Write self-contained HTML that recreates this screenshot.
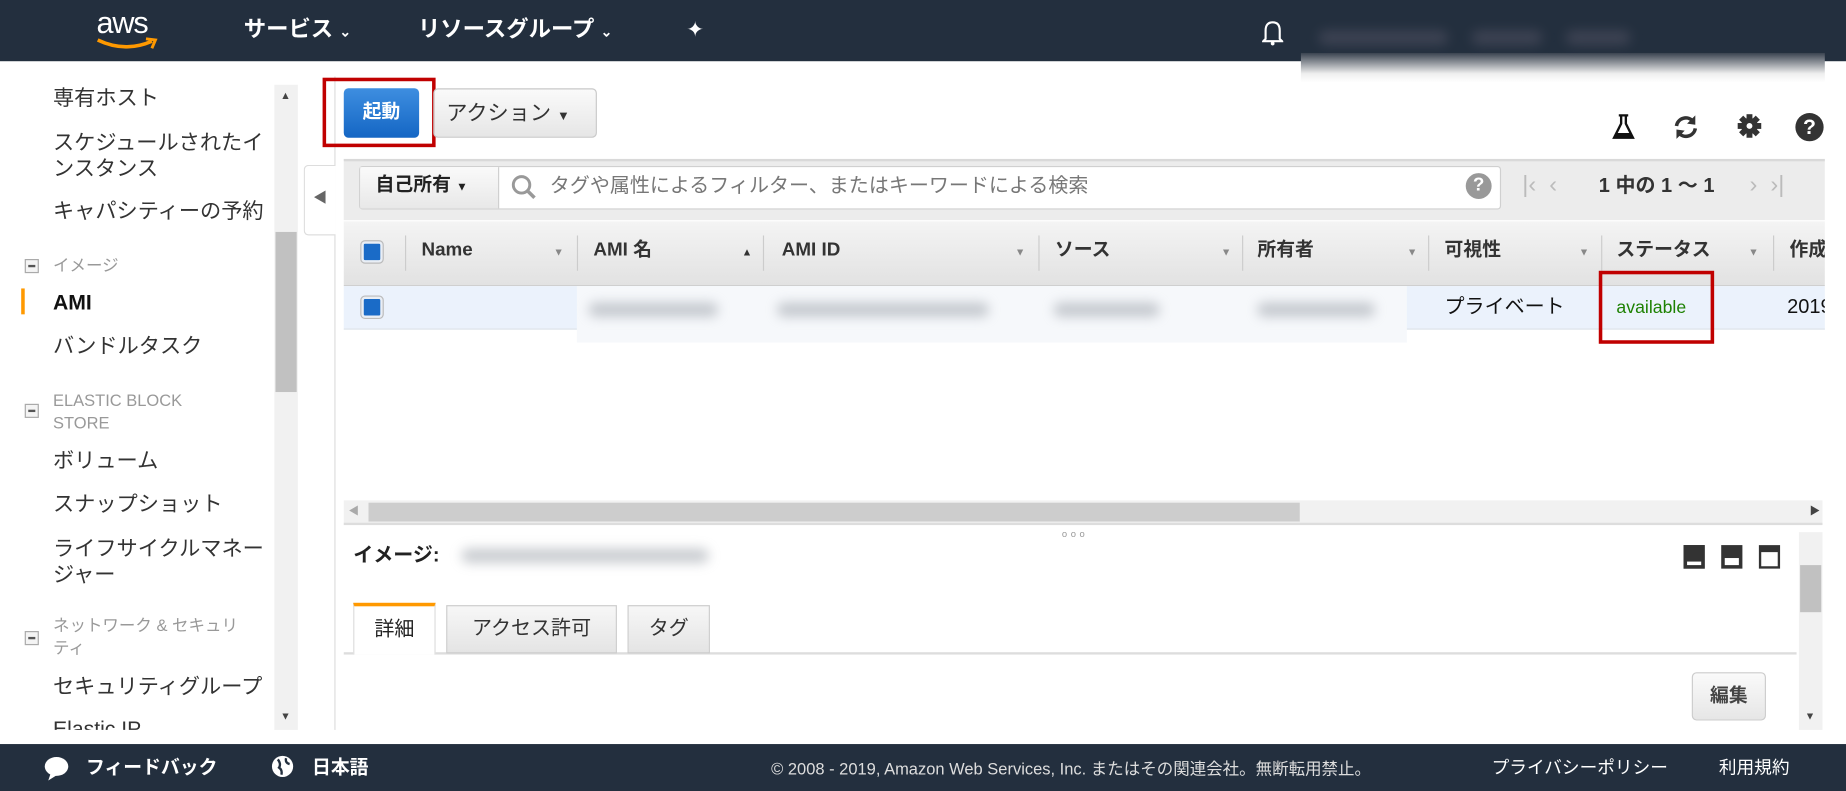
<!DOCTYPE html>
<html><head><meta charset="utf-8"><style>
*{box-sizing:border-box;margin:0;padding:0}
html,body{width:1846px;height:791px;overflow:hidden;background:#fff}
#w{position:absolute;left:0;top:0;width:1568px;height:672px;transform:scale(1.17730);transform-origin:0 0;font-family:"Liberation Sans","Noto Sans CJK JP",sans-serif;color:#222;line-height:1.2}
.a{position:absolute}
.nav{left:0;top:0;width:1568px;height:52px;background:#232f3e}
.nt{color:#fff;font-weight:bold;font-size:19px;top:15px;line-height:22px}
.sb{font-size:18px;color:#333;left:45px;line-height:22px}
.gh{font-size:14px;color:#999;left:45px;line-height:19px}
.mb{left:21px;width:12px;height:12px;border:1px solid #aaa;background:#f4f4f4}
.mb:after{content:"";position:absolute;left:2px;top:4px;width:6px;height:2px;background:#555}
.th{font-size:16px;font-weight:bold;color:#333;top:203px;line-height:20px}
.ar{font-size:9px;color:#888;top:209px}
.sep{top:200px;width:1px;height:30px;background:#ccc}
.cb{width:18px;height:18px;border-radius:3px;background:#1a6bc7;border:2px solid #e9eef5;box-shadow:0 0 0 1px #bbb}
.blur{background:#9aa0a8;filter:blur(5px);opacity:.55;height:12px;border-radius:6px}
.ft{color:#fff;font-size:16px;top:643px;line-height:20px}
</style></head><body><div id="w">
<div class="a nav"></div>
<div class="a" style="left:82px;top:4px;color:#fff;font-size:26px;letter-spacing:-1px">aws</div>
<svg class="a" style="left:80px;top:31px" width="56" height="14"><path d="M3 3 Q26 14 49 4" stroke="#f90" stroke-width="3" fill="none"/><path d="M44 2 L52 3 L49 10" stroke="#f90" stroke-width="2.5" fill="none"/></svg>
<div class="a nt" style="left:207px">サービス <span style="font-size:12px">⌄</span></div>
<div class="a nt" style="left:355px">リソースグループ <span style="font-size:12px">⌄</span></div>
<div class="a" style="left:583px;top:15px;color:#fff;font-size:18px">✦</div>
<svg class="a" style="left:1072px;top:15px" width="18" height="24"><path d="M3 18 L3 11 Q3 4 9 4 Q15 4 15 11 L15 18 L17 20 L1 20 Z" stroke="#fff" stroke-width="1.8" fill="none"/><circle cx="9" cy="22" r="1.6" fill="#fff"/></svg>
<div class="a" style="left:1105px;top:45px;width:445px;height:25px;background:linear-gradient(#3a4350,#eee 70%,#fff)"></div>
<div class="a blur" style="left:1120px;top:26px;width:110px;background:#556"></div>
<div class="a blur" style="left:1250px;top:26px;width:60px;background:#556"></div>
<div class="a blur" style="left:1330px;top:26px;width:55px;background:#556"></div>

<div class="a sb" style="top:72px">専有ホスト</div>
<div class="a sb" style="top:110px">スケジュールされたイ<br>ンスタンス</div>
<div class="a sb" style="top:168px">キャパシティーの予約</div>
<div class="a mb" style="top:220px"></div><div class="a gh" style="top:216px">イメージ</div>
<div class="a" style="left:18px;top:245px;width:3px;height:22px;background:#f90"></div>
<div class="a sb" style="top:246px;font-weight:bold;color:#111">AMI</div>
<div class="a sb" style="top:283px">バンドルタスク</div>
<div class="a mb" style="top:343px"></div><div class="a gh" style="top:331px">ELASTIC BLOCK<br>STORE</div>
<div class="a sb" style="top:380px">ボリューム</div>
<div class="a sb" style="top:417px">スナップショット</div>
<div class="a sb" style="top:455px">ライフサイクルマネー<br>ジャー</div>
<div class="a mb" style="top:536px"></div><div class="a gh" style="top:522px">ネットワーク &amp; セキュリ<br>ティ</div>
<div class="a sb" style="top:572px">セキュリティグループ</div>
<div class="a sb" style="top:608px;height:12px;overflow:hidden">Elastic IP</div>
<div class="a" style="left:233px;top:72px;width:20px;height:548px;background:#f1f1f1"></div>
<div class="a" style="left:234px;top:197px;width:18px;height:136px;background:#c1c1c1"></div>
<div class="a" style="left:238px;top:76px;font-size:9px;color:#444">▲</div>
<div class="a" style="left:238px;top:603px;font-size:9px;color:#444">▼</div>
<div class="a" style="left:284px;top:65px;width:1px;height:555px;background:#ddd"></div>
<div class="a" style="left:258px;top:140px;width:27px;height:60px;border:1px solid #ddd;border-right:none;background:#fff;border-radius:4px 0 0 4px;color:#666;font-size:12px;padding:20px 0 0 7px">◀</div>

<div class="a" style="left:292px;top:75px;width:64px;height:42px;background:linear-gradient(#3e8ee0,#1466c4);border-radius:4px;color:#fff;font-weight:bold;font-size:16px;text-align:center;line-height:42px">起動</div>
<div class="a" style="left:274px;top:66px;width:96px;height:59px;border:3px solid #c00000"></div>
<div class="a" style="left:368px;top:75px;width:139px;height:42px;background:linear-gradient(#fafafa,#e6e6e6);border:1px solid #c8c8c8;border-radius:4px;font-size:18px;color:#333;padding:0 0 0 10px;line-height:40px">アクション <span style="font-size:11px">▼</span></div>
<svg class="a" style="left:1368px;top:96px" width="22" height="24"><path d="M7 2 H15 M9 2 V9 L3 21 H19 L13 9 V2" stroke="#111" stroke-width="2" fill="none"/><path d="M5 17 L17 17 L19 21 H3 Z" fill="#111"/></svg>
<svg class="a" style="left:1420px;top:96px" width="24" height="24"><path d="M4 11 A8 8 0 0 1 18 7" stroke="#333" stroke-width="3" fill="none"/><path d="M20 2 L20 10 L13 9 Z" fill="#333"/><path d="M20 13 A8 8 0 0 1 6 17" stroke="#333" stroke-width="3" fill="none"/><path d="M4 22 L4 14 L11 15 Z" fill="#333"/></svg>
<svg class="a" style="left:1475px;top:96px" width="22" height="22"><g fill="#333" transform="translate(11 11)"><circle r="7"/><rect x="-2.5" y="-10" width="5" height="20"/><rect x="-10" y="-2.5" width="20" height="5"/><rect x="-2.5" y="-10" width="5" height="20" transform="rotate(45)"/><rect x="-2.5" y="-10" width="5" height="20" transform="rotate(-45)"/></g><circle cx="11" cy="11" r="2.5" fill="#fff"/></svg>
<div class="a" style="left:1525px;top:96px;width:24px;height:24px;border-radius:50%;background:#333;color:#fff;font-weight:bold;font-size:18px;text-align:center;line-height:24px">?</div>

<div class="a" style="left:292px;top:135px;width:1258px;height:52px;background:#ececec;border-top:2px solid #d9d9d9"></div>
<div class="a" style="left:305px;top:141px;width:970px;height:37px;background:#fff;border:1px solid #d0d0d0;border-radius:3px"></div>
<div class="a" style="left:306px;top:142px;width:118px;height:35px;background:linear-gradient(#fafafa,#e8e8e8);border-right:1px solid #d0d0d0;font-size:16px;font-weight:bold;color:#222;padding-left:13px;line-height:32px">自己所有 <span style="font-size:10px;font-weight:normal">▼</span></div>
<svg class="a" style="left:433px;top:147px" width="24" height="24"><circle cx="10" cy="10" r="7" stroke="#999" stroke-width="2.5" fill="none"/><path d="M15 15 L21 21" stroke="#999" stroke-width="3"/></svg>
<div class="a" style="left:467px;top:147px;font-size:17px;color:#777;line-height:22px">タグや属性によるフィルター、またはキーワードによる検索</div>
<div class="a" style="left:1245px;top:147px;width:22px;height:22px;border-radius:50%;background:#999;color:#fff;font-weight:bold;font-size:16px;text-align:center;line-height:22px">?</div>
<div class="a" style="left:1293px;top:145px;font-size:20px;color:#bbb;line-height:24px">|‹ &nbsp;‹</div>
<div class="a" style="left:1358px;top:147px;font-size:17px;font-weight:bold;color:#333;line-height:22px">1 中の 1 ～ 1</div>
<div class="a" style="left:1486px;top:145px;font-size:20px;color:#bbb;line-height:24px">› &nbsp;›|</div>

<div class="a" style="left:292px;top:188px;width:1258px;height:55px;background:linear-gradient(#f4f4f4,#e2e2e2);border-bottom:1px solid #cfcfcf"></div>
<div class="a cb" style="left:307px;top:205px"></div>
<div class="a sep" style="left:344px"></div>
<div class="a th" style="left:358px">Name</div><div class="a ar" style="left:470px">▼</div><div class="a sep" style="left:490px"></div>
<div class="a th" style="left:504px">AMI 名</div><div class="a ar" style="left:630px;color:#333">▲</div><div class="a sep" style="left:648px"></div>
<div class="a th" style="left:664px">AMI ID</div><div class="a ar" style="left:862px">▼</div><div class="a sep" style="left:882px"></div>
<div class="a th" style="left:896px">ソース</div><div class="a ar" style="left:1037px">▼</div><div class="a sep" style="left:1055px"></div>
<div class="a th" style="left:1068px">所有者</div><div class="a ar" style="left:1195px">▼</div><div class="a sep" style="left:1213px"></div>
<div class="a th" style="left:1227px">可視性</div><div class="a ar" style="left:1341px">▼</div><div class="a sep" style="left:1360px"></div>
<div class="a th" style="left:1373px">ステータス</div><div class="a ar" style="left:1485px">▼</div><div class="a sep" style="left:1506px"></div>
<div class="a th" style="left:1520px;width:30px;overflow:hidden;white-space:nowrap">作成日</div>

<div class="a" style="left:292px;top:243px;width:1258px;height:37px;background:#ebf2fc;border-bottom:1px solid #dde3ea"></div>
<div class="a" style="left:490px;top:243px;width:705px;height:48px;background:#f6f8fb"></div>
<div class="a cb" style="left:307px;top:252px"></div>
<div class="a blur" style="left:500px;top:257px;width:110px"></div>
<div class="a blur" style="left:660px;top:257px;width:180px"></div>
<div class="a blur" style="left:895px;top:257px;width:90px"></div>
<div class="a blur" style="left:1068px;top:257px;width:100px"></div>
<div class="a" style="left:1227px;top:250px;font-size:17px;color:#111;line-height:22px">プライベート</div>
<div class="a" style="left:1373px;top:252px;font-size:15px;color:#1d8102;line-height:20px">available</div>
<div class="a" style="left:1518px;top:250px;font-size:17px;color:#111;width:32px;overflow:hidden;white-space:nowrap;line-height:22px">2019</div>
<div class="a" style="left:1358px;top:230px;width:98px;height:62px;border:3px solid #c00000"></div>

<div class="a" style="left:292px;top:425px;width:1256px;height:21px;background:#f1f1f1;border-bottom:2px solid #ddd"></div>
<div class="a" style="left:313px;top:427px;width:791px;height:16px;background:#cdcdcd"></div>
<div class="a" style="left:296px;top:429px;font-size:9px;color:#aaa">◀</div>
<div class="a" style="left:1537px;top:429px;font-size:9px;color:#444">▶</div>
<div class="a" style="left:902px;top:449px;font-size:8px;color:#999;letter-spacing:3px">ooo</div>

<div class="a" style="left:300px;top:461px;font-size:17px;font-weight:bold;color:#222;line-height:22px">イメージ:</div>
<div class="a blur" style="left:392px;top:466px;width:210px"></div>
<div class="a" style="left:1430px;top:463px;width:18px;height:20px;background:#333;border:2px solid #333"><div style="position:absolute;left:1px;bottom:1px;width:12px;height:3px;background:#fff"></div></div>
<div class="a" style="left:1462px;top:463px;width:18px;height:20px;background:#333"><div style="position:absolute;left:3px;bottom:3px;width:12px;height:6px;background:#fff"></div></div>
<div class="a" style="left:1494px;top:463px;width:18px;height:20px;border:2px solid #333;border-top-width:6px"></div>
<div class="a" style="left:1528px;top:452px;width:20px;height:168px;background:#f1f1f1"></div>
<div class="a" style="left:1529px;top:480px;width:18px;height:40px;background:#c1c1c1"></div>
<div class="a" style="left:1533px;top:603px;font-size:9px;color:#444">▼</div>
<div class="a" style="left:292px;top:554px;width:1234px;height:2px;background:#ddd"></div>
<div class="a" style="left:300px;top:512px;width:70px;height:44px;background:#fff;border:1px solid #ddd;border-top:3px solid #f90;border-bottom:none;font-size:17px;text-align:center;line-height:40px">詳細</div>
<div class="a" style="left:379px;top:514px;width:145px;height:41px;background:linear-gradient(#f7f7f7,#e4e4e4);border:1px solid #ccc;font-size:17px;text-align:center;line-height:38px;color:#333">アクセス許可</div>
<div class="a" style="left:533px;top:514px;width:70px;height:41px;background:linear-gradient(#f7f7f7,#e4e4e4);border:1px solid #ccc;font-size:17px;text-align:center;line-height:38px;color:#333">タグ</div>
<div class="a" style="left:1437px;top:571px;width:63px;height:41px;background:linear-gradient(#fafafa,#e6e6e6);border:1px solid #ccc;border-radius:4px;font-size:16px;font-weight:bold;color:#444;text-align:center;line-height:40px">編集</div>

<div class="a" style="left:0;top:632px;width:1568px;height:40px;background:#232f3e"></div>
<svg class="a" style="left:37px;top:642px" width="24" height="22"><ellipse cx="11" cy="9" rx="10" ry="8" fill="#fff"/><path d="M6 15 L4 21 L12 16 Z" fill="#fff"/></svg>
<div class="a ft" style="left:73px;font-weight:bold">フィードバック</div>
<svg class="a" style="left:230px;top:641px" width="20" height="20"><circle cx="10" cy="10" r="9" fill="#fff"/><path d="M6 4 Q9 8 7 11 Q10 13 9 17 M13 3 Q12 7 16 8" stroke="#232f3e" stroke-width="2" fill="none"/></svg>
<div class="a ft" style="left:265px;font-weight:bold">日本語</div>
<div class="a ft" style="left:655px;font-size:14px;color:#ddd">© 2008 - 2019, Amazon Web Services, Inc. またはその関連会社。無断転用禁止。</div>
<div class="a ft" style="left:1267px;font-size:15px">プライバシーポリシー</div>
<div class="a ft" style="left:1460px;font-size:15px">利用規約</div>
</div></body></html>
